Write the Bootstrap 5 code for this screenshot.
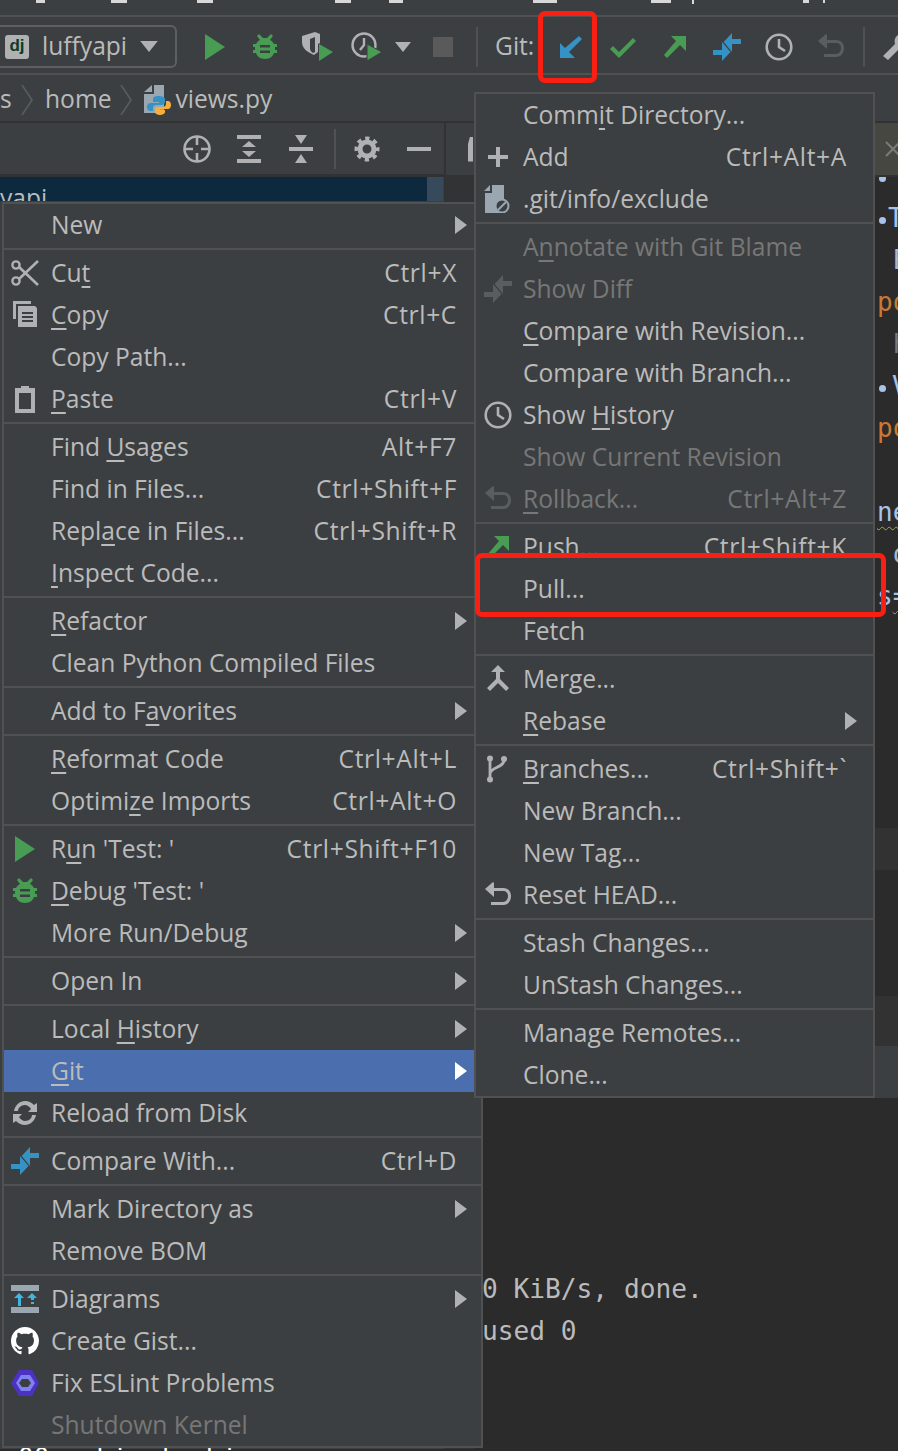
<!DOCTYPE html>
<html lang="en">
<head>
<meta charset="UTF-8">
<title>PyCharm Git menu</title>
<link href="https://cdn.jsdelivr.net/npm/bootstrap@5.3.3/dist/css/bootstrap.min.css" rel="stylesheet">
<style>
body { background: #2b2b2b; margin: 0; }
.ide { position: relative; width: 898px; height: 1451px; overflow: hidden; background: #2b2b2b; color: #bbb; font-family: "Open Sans", "Noto Sans", sans-serif; font-size: 24.6px; }
.ic { width: 28px; height: 28px; display: block; flex: none; }
.ic-wide { width: 32px; height: 29px; display: block; flex: none; }

/* top strips */
.bar-menu { height: 17px; background: #3c3f41; border-bottom: 2px solid #515151; overflow: hidden; position: relative; }
.bar-menu span { position: absolute; top: 0; height: 3px; background: #d8d8d8; }
.u1 { left: 36px; width: 9px; } .u2 { left: 111px; width: 16px; } .u3 { left: 197px; width: 16px; } .u4 { left: 335px; width: 16px; }
.u5 { left: 389px; width: 14px; } .u6 { left: 533px; width: 24px; } .u7 { left: 651px; width: 20px; } .u8 { left: 692px; width: 2px; height: 4px !important; }
.u9 { left: 803px; width: 6px; } .u10 { left: 823px; width: 2px; }
.bar-tools { height: 58px; background: #3c3f41; border-bottom: 2px solid #515151; padding-top: 3px; }
.bar-tools > * { flex: none; }
.run-combo { width: 183px; height: 43px; margin-left: -6px; padding-left: 9px; border: 2px solid #5e6060; border-radius: 6px; }
.dj-tag { width: 24px; height: 24px; border-radius: 3px; background: #afb1b3; color: #0c3c26; font-family: "Liberation Sans", sans-serif; font-weight: 700; font-size: 17px; line-height: 22px; text-align: center; }
.combo-name { margin-left: 13px; width: 98px; }
.tool { height: 29px; display: flex; justify-content: center; align-items: center; }
.t50 { width: 50px; } .t52 { width: 52px; } .t49 { width: 49px; } .t24 { width: 24px; } .t56 { width: 56px; }
.first-tool { margin-left: 13px; }
.tool-nudge { margin-left: 3px; }
.tool-sep { width: 2px; height: 40px; background: #515151; margin-left: 5px; }
.git-label { margin: 0 12px 0 17px; width: 38px; }
.sep-gap { margin: 0 15px 0 6px; }
.bar-crumb { height: 48px; background: #3c3f41; border-bottom: 2px solid #323232; padding-top: 3px; }
.bar-crumb > * { flex: none; }
.crumb-s { width: 13px; overflow: hidden; }
.chev { width: 12px; height: 30px; }
.crumb-first { margin-left: 8px; }
.crumb-home { margin: 0 9px 0 12px; }
.crumb-file { width: 28px; height: 30px; margin: 0 3px 0 12px; }

/* under the menus */
.work { height: 1326px; }
.side { width: 446px; background: #3c3f41; border-right: 2px solid #323232; }
.side-tools { height: 54px; padding-left: 171px; border-bottom: 3px solid #323232; }
.side-tools > * { flex: none; }
.side-tool { width: 52px; display: flex; justify-content: center; }
.side-sep { width: 2px; height: 40px; background: #515151; margin: 0 5px 0 7px; }
.tree-row { height: 24px; background: #0d293e; position: relative; overflow: hidden; line-height: 42px; color: #bbb; width: 443px; }
.tree-thumb { position: absolute; right: 0; top: 0; bottom: 0; width: 16px; background: #364a5c; }
.main { background: linear-gradient(90deg, #313335 28px, #2b2b2b 28px); min-width: 0; }
.tabs { height: 54px; background: #3c3f41; border-bottom: 2px solid #323232; position: relative; z-index: 1; flex: none; }
.tab-stub { width: 5px; height: 25px; margin-left: 22px; background: #afb1b3; clip-path: polygon(40% 0, 100% 0, 100% 100%, 0 100%, 0 30%); }
.tab-open { width: 23px; height: 100%; margin-left: auto; background: #464741; padding: 0 0 0 10px; }
.tab-x { width: 16px; height: 16px; display: block; }
.code-lines { height: 594px; overflow: hidden; font-family: "DejaVu Sans Mono", "Liberation Mono", monospace; font-size: 26px; line-height: 42px; padding-left: 431px; white-space: pre; margin: -22px 0 0; flex: none; }
.c-blue { color: #a9c2e8; } .c-org { color: #cc7832; } .c-dim { color: #787878; } .c-txt { color: #a9b7c6; }
.wavy { text-decoration: underline wavy #a5a55b; text-decoration-thickness: 1px; text-underline-offset: 5px; }
.dot { display: inline-block; width: 7px; height: 7px; border-radius: 50%; background: #a9c2e8; margin: 0 6px 3px 2px; }
.dot-tight { margin-right: 2px; }
.gap-a { height: 79px; flex: none; }
.band-a { height: 42px; background: #323232; flex: none; }
.gap-b { height: 126px; flex: none; }
.band-b { height: 50px; background: #323232; flex: none; }
.band-c { height: 52px; background: #3c3f41; flex: none; }
.term { flex: 1; }
.term-lines { margin: 170px 0 0 36px; font-family: "DejaVu Sans Mono", "Liberation Mono", monospace; font-size: 26.2px; line-height: 42px; color: #bbb; white-space: pre; }
.term-cut { position: absolute; left: 18px; top: 1442px; font-family: "DejaVu Sans Mono", monospace; font-size: 26px; line-height: 32px; color: #fff; white-space: pre; }

/* popup menus */
.ide .ide-menu { display: block; position: absolute; padding: 0; margin: 0; border: 2px solid #515151; border-radius: 0; background: #3c3f41; font-size: 24.6px; --bs-dropdown-link-color: #bbb; }
.ide-menu-l { left: 2px; top: 202px; width: 481px; z-index: 5; }
.ide-menu-r { left: 474px; top: 92px; width: 401px; z-index: 6; }
.ide-menu .dropdown-item { height: 42px; padding: 0 24px 1px 7px; color: #bbb; background: transparent; line-height: 41px; }
.ide-menu-r .dropdown-item { padding: 0 26px 1px 8px; }
.ide-menu .dropdown-item.disabled { color: #777; }
.ide-menu .dropdown-item.active { background: #4b6eaf; color: #bbb; }
.ide-menu .dropdown-divider { margin: 2px 0; border-top: 2px solid #515151; opacity: 1; height: 0; }
.slot { width: 40px; flex: none; }
.ide-menu-r .slot { width: 39px; }
.ide-menu u { text-decoration-thickness: 2px; text-underline-offset: 4px; }
.keys { margin-left: auto; letter-spacing: .65px; }
.sub-arrow { margin-left: auto; margin-right: -11px; width: 14px; height: 18px; flex: none; }
.sub-arrow.active-arrow { fill: #fff; }

/* red marks on the screenshot */
.mark-box { position: absolute; border: 5px solid #f91f13; border-radius: 7px; z-index: 9; }
.mark-git { left: 538px; top: 11px; width: 59px; height: 72px; }
.mark-pull { left: 475px; top: 553px; width: 411px; height: 64px; }
</style>
</head>
<body>
<svg width="0" height="0" class="position-absolute">
  <symbol id="i-run" viewBox="0 0 28 28"><path d="M4 1l20 13L4 27z" fill="#499c54"/></symbol>
  <symbol id="i-bug" viewBox="0 0 28 28"><path d="M8 1l4 4h4l4-4 2 2-3 4c2 1 3 2 4 4h3v3h-2v3h2v3h-3c-1 3-4 6-9 6s-8-3-9-6H2v-3h2v-3H2v-3h3c1-2 2-3 4-4L6 3z" fill="#499c54"/><path d="M9 12h10v2.500H9zM9 17.500h10V20H9z" fill="#3c3f41"/></symbol>
  <symbol id="i-cover" viewBox="0 0 32 29"><path d="M0 4l13-4 5 2v9l-2 1v8l-4 3C5 20 0 16 0 10z" fill="#afb1b3"/><path d="M8 7l5-2v15l-2 1c-2-1-3-3-3-5z" fill="#3c3f41"/><path d="M17 12l14 8-14 9z" fill="#499c54"/></symbol>
  <symbol id="i-prof" viewBox="0 0 32 29"><circle cx="13" cy="13" r="11.500" fill="none" stroke="#afb1b3" stroke-width="2.400"/><path d="M13 6v7l-4 5" fill="none" stroke="#afb1b3" stroke-width="2.400"/><path d="M16 12l15 8-15 9z" fill="#499c54" stroke="#3c3f41" stroke-width="1"/></symbol>
  <symbol id="i-down" viewBox="0 0 16 10"><path d="M0 0h16L8 10z" fill="#afb1b3"/></symbol>
  <symbol id="i-update" viewBox="0 0 28 28"><path d="M3 25V10l5 5L22 3l3 3L12 19l6 6z" fill="#3592c4"/></symbol>
  <symbol id="i-check" viewBox="0 0 28 28"><path d="M1 16l3-3 6 6L24 5l3 3-17 17z" fill="#499c54"/></symbol>
  <symbol id="i-push" viewBox="0 0 28 28"><path d="M25 3H10l5 5L3 22l3 3L19 12l6 6z" fill="#499c54"/></symbol>
  <symbol id="i-diff" viewBox="0 0 28 28"><path d="M10.700 9L19 0v6h9v5h-9v8zM17.500 19L9 28v-6H0v-5h9V9z" fill="#3592c4"/></symbol>
  <symbol id="i-diffo" viewBox="0 0 28 28"><path d="M10.700 9L19 0v6h9v5h-9v8zM17.500 19L9 28v-6H0v-5h9V9z" fill="#5a5d5f"/></symbol>
  <symbol id="i-clock" viewBox="0 0 28 28"><circle cx="14" cy="14" r="12.300" fill="none" stroke="#afb1b3" stroke-width="2.600"/><path d="M14 6v8l6 4" fill="none" stroke="#afb1b3" stroke-width="2.600"/></symbol>
  <symbol id="i-back" viewBox="0 0 28 28"><path d="M9 1l1 1v5h9c5 0 8 3 8 8s-3 9-8 9H7v-3h12c3 0 5-3 5-6s-2-5-5-5h-9v6L1 8z" fill="currentColor"/></symbol>
  <symbol id="i-wrench" viewBox="0 0 28 28"><path d="M25 1l-5 5 2 3 3 1 3-4c1 4 0 8-3 9-2 1-3 1-5 0L8 27l-5-4 12-12c-1-4 0-7 3-9 2-1 5-2 7-1z" fill="#afb1b3"/></symbol>
  <symbol id="i-chev" viewBox="0 0 12 30"><path d="M1 0l10 15L1 30" fill="none" stroke="#5a5d5f" stroke-width="1.600"/></symbol>
  <symbol id="i-py" viewBox="0 0 28 30"><path d="M10 0h10v28H0V9h10z" fill="#9aa7b0"/><path d="M0 7l8-7v7z" fill="#9aa7b0"/><path d="M14 11c-3 0-5 1-5 3v3h6v1H7c-3 0-4 2-4 4s1 4 4 4h2v-3c0-2 1-3 3-3h6c1 0 3-1 3-3v-3c0-2-3-3-7-3z" fill="#3592c4"/><path d="M22 16v3c0 2-2 3-3 3h-6c-1 0-2 1-2 2v3c0 2 3 3 5 3s5-1 5-3v-2h-5v-1h8c2 0 3-2 3-4s-1-4-3-4z" fill="#f4af3d"/></symbol>
  <symbol id="i-locate" viewBox="0 0 28 28"><circle cx="14" cy="14" r="12.500" fill="none" stroke="#afb1b3" stroke-width="2.600"/><path d="M14 1v9M14 18v9M1 14h9M18 14h9" stroke="#afb1b3" stroke-width="2.600"/></symbol>
  <symbol id="i-expand" viewBox="0 0 24 28"><path d="M0 0h24v4H0zM0 24h24v4H0zM12 6l7 6H5zM12 22l-7-6h14z" fill="#afb1b3"/></symbol>
  <symbol id="i-collapse" viewBox="0 0 24 28"><path d="M0 12h24v4H0zM6 0h12l-6 9zM6 28h12l-6-9z" fill="#afb1b3"/></symbol>
  <symbol id="i-gear" viewBox="0 0 26 26"><circle cx="13" cy="13" r="7" fill="none" stroke="#afb1b3" stroke-width="5"/><circle cx="13" cy="13" r="10.500" fill="none" stroke="#afb1b3" stroke-width="4" stroke-dasharray="4.200 4.046" stroke-dashoffset="2.100"/></symbol>
  <symbol id="i-hide" viewBox="0 0 24 4"><path d="M0 0h24v4H0z" fill="#afb1b3"/></symbol>
  <symbol id="i-plus" viewBox="0 0 28 28"><path d="M12 4h4v8h8v4h-8v8h-4v-8H4v-4h8z" fill="#afb1b3"/></symbol>
  <symbol id="i-excl" viewBox="0 0 28 28"><path d="M8 0h12v28H1V8h7zM0 6l6-6v6z" fill="#9aa7b0"/><circle cx="18" cy="21" r="6.500" fill="#3c3f41" stroke="#9aa7b0" stroke-width="2"/><path d="M14 25l8-8" stroke="#9aa7b0" stroke-width="2"/></symbol>
  <symbol id="i-cut" viewBox="0 0 28 28"><circle cx="5" cy="6" r="3.600" fill="none" stroke="#afb1b3" stroke-width="2.400"/><circle cx="5" cy="22" r="3.600" fill="none" stroke="#afb1b3" stroke-width="2.400"/><path d="M8 8l19 18M8 20L27 2" stroke="#afb1b3" stroke-width="2.600"/></symbol>
  <symbol id="i-copy" viewBox="0 0 28 28"><path d="M2 0h18v3H5v15H2z" fill="#afb1b3"/><path d="M7 5h17l2 2v19H7z" fill="#afb1b3"/><path d="M11 11h11v2H11zM11 15h11v2H11zM11 19h11v2H11z" fill="#3c3f41"/></symbol>
  <symbol id="i-paste" viewBox="0 0 28 28"><path d="M4 3h6V1h8v2h6v25H4z" fill="#afb1b3"/><path d="M8 8h12v16H8z" fill="#3c3f41"/></symbol>
  <symbol id="i-merge" viewBox="0 0 28 28"><path d="M14 0l7 7h-5v7l9 9-3 3-8-8-8 8-3-3 9-9V7H7z" fill="#afb1b3"/></symbol>
  <symbol id="i-branch" viewBox="0 0 28 28"><circle cx="6" cy="3.500" r="3" fill="#afb1b3"/><circle cx="6" cy="24.500" r="3" fill="#afb1b3"/><circle cx="20" cy="4" r="3" fill="#afb1b3"/><path d="M6 4v20M20 5c0 8-14 7-14 14" fill="none" stroke="#afb1b3" stroke-width="2.800"/></symbol>
  <symbol id="i-reload" viewBox="0 0 28 28"><path d="M3 12C4 6 9 2 14 2c4 0 7 2 9 4l3-2v9h-9l3-3c-1-2-4-4-6-4-4 0-7 3-7 6zM25 16c-1 6-6 10-11 10-4 0-7-2-9-4l-3 2v-9h9l-3 3c1 2 4 4 6 4 4 0 7-3 7-6z" fill="#afb1b3"/></symbol>
  <symbol id="i-uml" viewBox="0 0 28 28"><path d="M0 0h28v6H0zM0 22h28v6H0z" fill="#9aa7b0"/><path d="M8 8l5 5h-3v8H7v-8H3zM21 8l5 5h-3v2h-3v-2h-4zM20 17h3v2h-3z" fill="#40b6e0"/></symbol>
  <symbol id="i-github" viewBox="0 0 16 16"><path d="M8 0C3.580 0 0 3.580 0 8c0 3.540 2.290 6.530 5.470 7.590.4.070.55-.17.55-.38 0-.19-.01-.82-.01-1.490-2.010.37-2.530-.49-2.690-.94-.09-.23-.48-.94-.82-1.130-.28-.15-.68-.52-.01-.53.63-.01 1.080.58 1.230.82.72 1.210 1.870.87 2.330.66.07-.52.28-.87.51-1.070-1.780-.2-3.640-.89-3.640-3.950 0-.87.31-1.590.82-2.150-.08-.2-.36-1.020.08-2.120 0 0 .67-.21 2.200.82.64-.18 1.320-.27 2-.27.68 0 1.360.09 2 .27 1.530-1.040 2.200-.82 2.200-.82.44 1.100.16 1.920.08 2.120.51.56.82 1.270.82 2.150 0 3.070-1.870 3.750-3.650 3.950.29.25.54.73.54 1.480 0 1.070-.01 1.930-.01 2.200 0 .21.15.46.55.38A8.013 8.013 0 0016 8c0-4.420-3.580-8-8-8z" fill="#fff"/></symbol>
  <symbol id="i-eslint" viewBox="0 0 28 28"><path d="M8 1l13 0 7 13-7 13-13 0L0 14z" fill="#4b32c3"/><path d="M10 6l9 0 5 8-5 8-9 0-5-8z" fill="#8080f2"/><path d="M11 10l6 0 3 4-3 4-6 0-3-4z" fill="#3c3f41"/></symbol>
  <symbol id="i-arrow" viewBox="0 0 14 18"><path d="M1 0l12 9L1 18z"/></symbol>
</svg>

<div class="ide d-flex flex-column">
  <div class="bar-menu">
    <span class="u1"></span><span class="u2"></span><span class="u3"></span><span class="u4"></span><span class="u5"></span><span class="u6"></span><span class="u7"></span><span class="u8"></span><span class="u9"></span><span class="u10"></span>
  </div>

  <div class="bar-tools d-flex align-items-center">
    <div class="run-combo d-flex align-items-center">
      <div class="dj-tag flex-shrink-0">dj</div>
      <div class="combo-name flex-shrink-0">luffyapi</div>
      <svg class="flex-shrink-0" width="18" height="11"><use href="#i-down"/></svg>
    </div>
    <div class="tool t50 first-tool"><svg class="ic"><use href="#i-run"/></svg></div>
    <div class="tool t50"><svg class="ic"><use href="#i-bug"/></svg></div>
    <div class="tool t52"><svg class="ic-wide tool-nudge"><use href="#i-cover"/></svg></div>
    <div class="tool t49"><svg class="ic-wide"><use href="#i-prof"/></svg></div>
    <div class="tool t24"><svg width="16" height="10"><use href="#i-down"/></svg></div>
    <div class="tool t56"><svg width="20" height="20"><rect width="20" height="20" fill="#5a5a5a"/></svg></div>
    <div class="tool-sep"></div>
    <div class="git-label">Git:</div>
    <div class="tool t52"><svg class="ic"><use href="#i-update"/></svg></div>
    <div class="tool t52"><svg class="ic"><use href="#i-check"/></svg></div>
    <div class="tool t52"><svg class="ic"><use href="#i-push"/></svg></div>
    <div class="tool t52"><svg class="ic"><use href="#i-diff"/></svg></div>
    <div class="tool t52"><svg class="ic"><use href="#i-clock"/></svg></div>
    <div class="tool t52"><svg class="ic" color="#5a5d5f"><use href="#i-back"/></svg></div>
    <div class="tool-sep sep-gap"></div>
    <svg class="ic"><use href="#i-wrench"/></svg>
  </div>

  <div class="bar-crumb d-flex align-items-center">
    <div class="crumb-s">s</div>
    <svg class="chev crumb-first"><use href="#i-chev"/></svg>
    <div class="crumb-home">home</div>
    <svg class="chev"><use href="#i-chev"/></svg>
    <svg class="crumb-file"><use href="#i-py"/></svg>
    <div>views.py</div>
  </div>

  <div class="work d-flex">
    <div class="side flex-shrink-0">
      <div class="side-tools d-flex align-items-center">
        <div class="side-tool"><svg class="ic"><use href="#i-locate"/></svg></div>
        <div class="side-tool"><svg width="24" height="28"><use href="#i-expand"/></svg></div>
        <div class="side-tool"><svg width="24" height="28"><use href="#i-collapse"/></svg></div>
        <div class="side-sep"></div>
        <div class="side-tool"><svg width="26" height="26"><use href="#i-gear"/></svg></div>
        <div class="side-tool"><svg width="24" height="4"><use href="#i-hide"/></svg></div>
      </div>
      <div class="tree-row">yapi<div class="tree-thumb"></div></div>
    </div>
    <div class="main flex-fill d-flex flex-column">
      <div class="tabs d-flex align-items-center">
        <div class="tab-stub"></div>
        <div class="tab-open d-flex align-items-center">
          <svg class="tab-x flex-shrink-0" viewBox="0 0 16 16"><path d="M1 1l14 14M15 1L1 15" stroke="#7a7b78" stroke-width="2"/></svg>
        </div>
      </div>
      <div class="code-lines"><span class="dot"></span><span class="c-dim">'</span>
<span class="dot dot-tight"></span><span class="c-blue">T</span>
<span class="c-txt"> E</span>
<span class="c-org">po</span>
<span class="c-dim"> h</span>
<span class="dot"></span><span class="c-blue">V</span>
<span class="c-org">po</span>

<span class="c-blue wavy">ne</span>
<span class="c-txt"> o</span>
<span class="c-blue">s<span class="wavy">=</span></span></div>
      <div class="gap-a"></div>
      <div class="band-a"></div>
      <div class="gap-b"></div>
      <div class="band-b"></div>
      <div class="band-c"></div>
      <div class="term"><div class="term-lines">0 KiB/s, done.
used 0</div></div>
    </div>
  </div>
  <div class="term-cut">00   hi  t  hi</div>

  <div class="dropdown-menu show ide-menu ide-menu-l">
    <a class="dropdown-item d-flex align-items-center"><span class="slot"></span>New<svg class="sub-arrow" fill="#afb1b3"><use href="#i-arrow"/></svg></a>
    <hr class="dropdown-divider">
    <a class="dropdown-item d-flex align-items-center"><span class="slot"><svg class="ic"><use href="#i-cut"/></svg></span><span>Cu<u>t</u></span><span class="keys">Ctrl+X</span></a>
    <a class="dropdown-item d-flex align-items-center"><span class="slot"><svg class="ic"><use href="#i-copy"/></svg></span><span><u>C</u>opy</span><span class="keys">Ctrl+C</span></a>
    <a class="dropdown-item d-flex"><span class="slot"></span>Copy Path...</a>
    <a class="dropdown-item d-flex align-items-center"><span class="slot"><svg class="ic"><use href="#i-paste"/></svg></span><span><u>P</u>aste</span><span class="keys">Ctrl+V</span></a>
    <hr class="dropdown-divider">
    <a class="dropdown-item d-flex"><span class="slot"></span><span>Find <u>U</u>sages</span><span class="keys">Alt+F7</span></a>
    <a class="dropdown-item d-flex"><span class="slot"></span>Find in Files...<span class="keys">Ctrl+Shift+F</span></a>
    <a class="dropdown-item d-flex"><span class="slot"></span><span>Repl<u>a</u>ce in Files...</span><span class="keys">Ctrl+Shift+R</span></a>
    <a class="dropdown-item d-flex"><span class="slot"></span><span><u>I</u>nspect Code...</span></a>
    <hr class="dropdown-divider">
    <a class="dropdown-item d-flex align-items-center"><span class="slot"></span><span><u>R</u>efactor</span><svg class="sub-arrow" fill="#afb1b3"><use href="#i-arrow"/></svg></a>
    <a class="dropdown-item d-flex"><span class="slot"></span>Clean Python Compiled Files</a>
    <hr class="dropdown-divider">
    <a class="dropdown-item d-flex align-items-center"><span class="slot"></span><span>Add to F<u>a</u>vorites</span><svg class="sub-arrow" fill="#afb1b3"><use href="#i-arrow"/></svg></a>
    <hr class="dropdown-divider">
    <a class="dropdown-item d-flex"><span class="slot"></span><span><u>R</u>eformat Code</span><span class="keys">Ctrl+Alt+L</span></a>
    <a class="dropdown-item d-flex"><span class="slot"></span><span>Optimi<u>z</u>e Imports</span><span class="keys">Ctrl+Alt+O</span></a>
    <hr class="dropdown-divider">
    <a class="dropdown-item d-flex align-items-center"><span class="slot"><svg class="ic"><use href="#i-run"/></svg></span><span>R<u>u</u>n 'Test: '</span><span class="keys">Ctrl+Shift+F10</span></a>
    <a class="dropdown-item d-flex align-items-center"><span class="slot"><svg class="ic"><use href="#i-bug"/></svg></span><span><u>D</u>ebug 'Test: '</span></a>
    <a class="dropdown-item d-flex align-items-center"><span class="slot"></span>More Run/Debug<svg class="sub-arrow" fill="#afb1b3"><use href="#i-arrow"/></svg></a>
    <hr class="dropdown-divider">
    <a class="dropdown-item d-flex align-items-center"><span class="slot"></span>Open In<svg class="sub-arrow" fill="#afb1b3"><use href="#i-arrow"/></svg></a>
    <hr class="dropdown-divider">
    <a class="dropdown-item d-flex align-items-center"><span class="slot"></span><span>Local <u>H</u>istory</span><svg class="sub-arrow" fill="#afb1b3"><use href="#i-arrow"/></svg></a>
    <a class="dropdown-item active d-flex align-items-center"><span class="slot"></span><span><u>G</u>it</span><svg class="sub-arrow active-arrow"><use href="#i-arrow"/></svg></a>
    <a class="dropdown-item d-flex align-items-center"><span class="slot"><svg class="ic"><use href="#i-reload"/></svg></span>Reload from Disk</a>
    <hr class="dropdown-divider">
    <a class="dropdown-item d-flex align-items-center"><span class="slot"><svg class="ic"><use href="#i-diff"/></svg></span>Compare With...<span class="keys">Ctrl+D</span></a>
    <hr class="dropdown-divider">
    <a class="dropdown-item d-flex align-items-center"><span class="slot"></span>Mark Directory as<svg class="sub-arrow" fill="#afb1b3"><use href="#i-arrow"/></svg></a>
    <a class="dropdown-item d-flex"><span class="slot"></span>Remove BOM</a>
    <hr class="dropdown-divider">
    <a class="dropdown-item d-flex align-items-center"><span class="slot"><svg class="ic"><use href="#i-uml"/></svg></span>Diagrams<svg class="sub-arrow" fill="#afb1b3"><use href="#i-arrow"/></svg></a>
    <a class="dropdown-item d-flex align-items-center"><span class="slot"><svg class="ic"><use href="#i-github"/></svg></span>Create Gist...</a>
    <a class="dropdown-item d-flex align-items-center"><span class="slot"><svg class="ic"><use href="#i-eslint"/></svg></span>Fix ESLint Problems</a>
    <a class="dropdown-item disabled d-flex"><span class="slot"></span>Shutdown Kernel</a>
  </div>

  <div class="dropdown-menu show ide-menu ide-menu-r">
    <a class="dropdown-item d-flex"><span class="slot"></span><span>Comm<u>i</u>t Directory...</span></a>
    <a class="dropdown-item d-flex align-items-center"><span class="slot"><svg class="ic"><use href="#i-plus"/></svg></span>Add<span class="keys">Ctrl+Alt+A</span></a>
    <a class="dropdown-item d-flex align-items-center"><span class="slot"><svg class="ic"><use href="#i-excl"/></svg></span>.git/info/exclude</a>
    <hr class="dropdown-divider">
    <a class="dropdown-item disabled d-flex"><span class="slot"></span><span>A<u>n</u>notate with Git Blame</span></a>
    <a class="dropdown-item disabled d-flex align-items-center"><span class="slot"><svg class="ic"><use href="#i-diffo"/></svg></span>Show Diff</a>
    <a class="dropdown-item d-flex"><span class="slot"></span><span><u>C</u>ompare with Revision...</span></a>
    <a class="dropdown-item d-flex"><span class="slot"></span>Compare with Branch...</a>
    <a class="dropdown-item d-flex align-items-center"><span class="slot"><svg class="ic"><use href="#i-clock"/></svg></span><span>Show <u>H</u>istory</span></a>
    <a class="dropdown-item disabled d-flex"><span class="slot"></span>Show Current Revision</a>
    <a class="dropdown-item disabled d-flex align-items-center"><span class="slot"><svg class="ic" color="#5a5d5f"><use href="#i-back"/></svg></span><span><u>R</u>ollback...</span><span class="keys">Ctrl+Alt+Z</span></a>
    <hr class="dropdown-divider">
    <a class="dropdown-item d-flex align-items-center"><span class="slot"><svg class="ic"><use href="#i-push"/></svg></span>Push...<span class="keys">Ctrl+Shift+K</span></a>
    <a class="dropdown-item d-flex"><span class="slot"></span>Pull...</a>
    <a class="dropdown-item d-flex"><span class="slot"></span>Fetch</a>
    <hr class="dropdown-divider">
    <a class="dropdown-item d-flex align-items-center"><span class="slot"><svg class="ic"><use href="#i-merge"/></svg></span>Merge...</a>
    <a class="dropdown-item d-flex align-items-center"><span class="slot"></span><span><u>R</u>ebase</span><svg class="sub-arrow" fill="#afb1b3"><use href="#i-arrow"/></svg></a>
    <hr class="dropdown-divider">
    <a class="dropdown-item d-flex align-items-center"><span class="slot"><svg class="ic"><use href="#i-branch"/></svg></span><span><u>B</u>ranches...</span><span class="keys">Ctrl+Shift+`</span></a>
    <a class="dropdown-item d-flex"><span class="slot"></span>New Branch...</a>
    <a class="dropdown-item d-flex"><span class="slot"></span>New Tag...</a>
    <a class="dropdown-item d-flex align-items-center"><span class="slot"><svg class="ic" color="#afb1b3"><use href="#i-back"/></svg></span>Reset HEAD...</a>
    <hr class="dropdown-divider">
    <a class="dropdown-item d-flex"><span class="slot"></span>Stash Changes...</a>
    <a class="dropdown-item d-flex"><span class="slot"></span>UnStash Changes...</a>
    <hr class="dropdown-divider">
    <a class="dropdown-item d-flex"><span class="slot"></span>Manage Remotes...</a>
    <a class="dropdown-item d-flex"><span class="slot"></span>Clone...</a>
  </div>

  <div class="mark-box mark-git"></div>
  <div class="mark-box mark-pull"></div>
</div>
<script src="https://cdn.jsdelivr.net/npm/bootstrap@5.3.3/dist/js/bootstrap.bundle.min.js"></script>
</body>
</html>
